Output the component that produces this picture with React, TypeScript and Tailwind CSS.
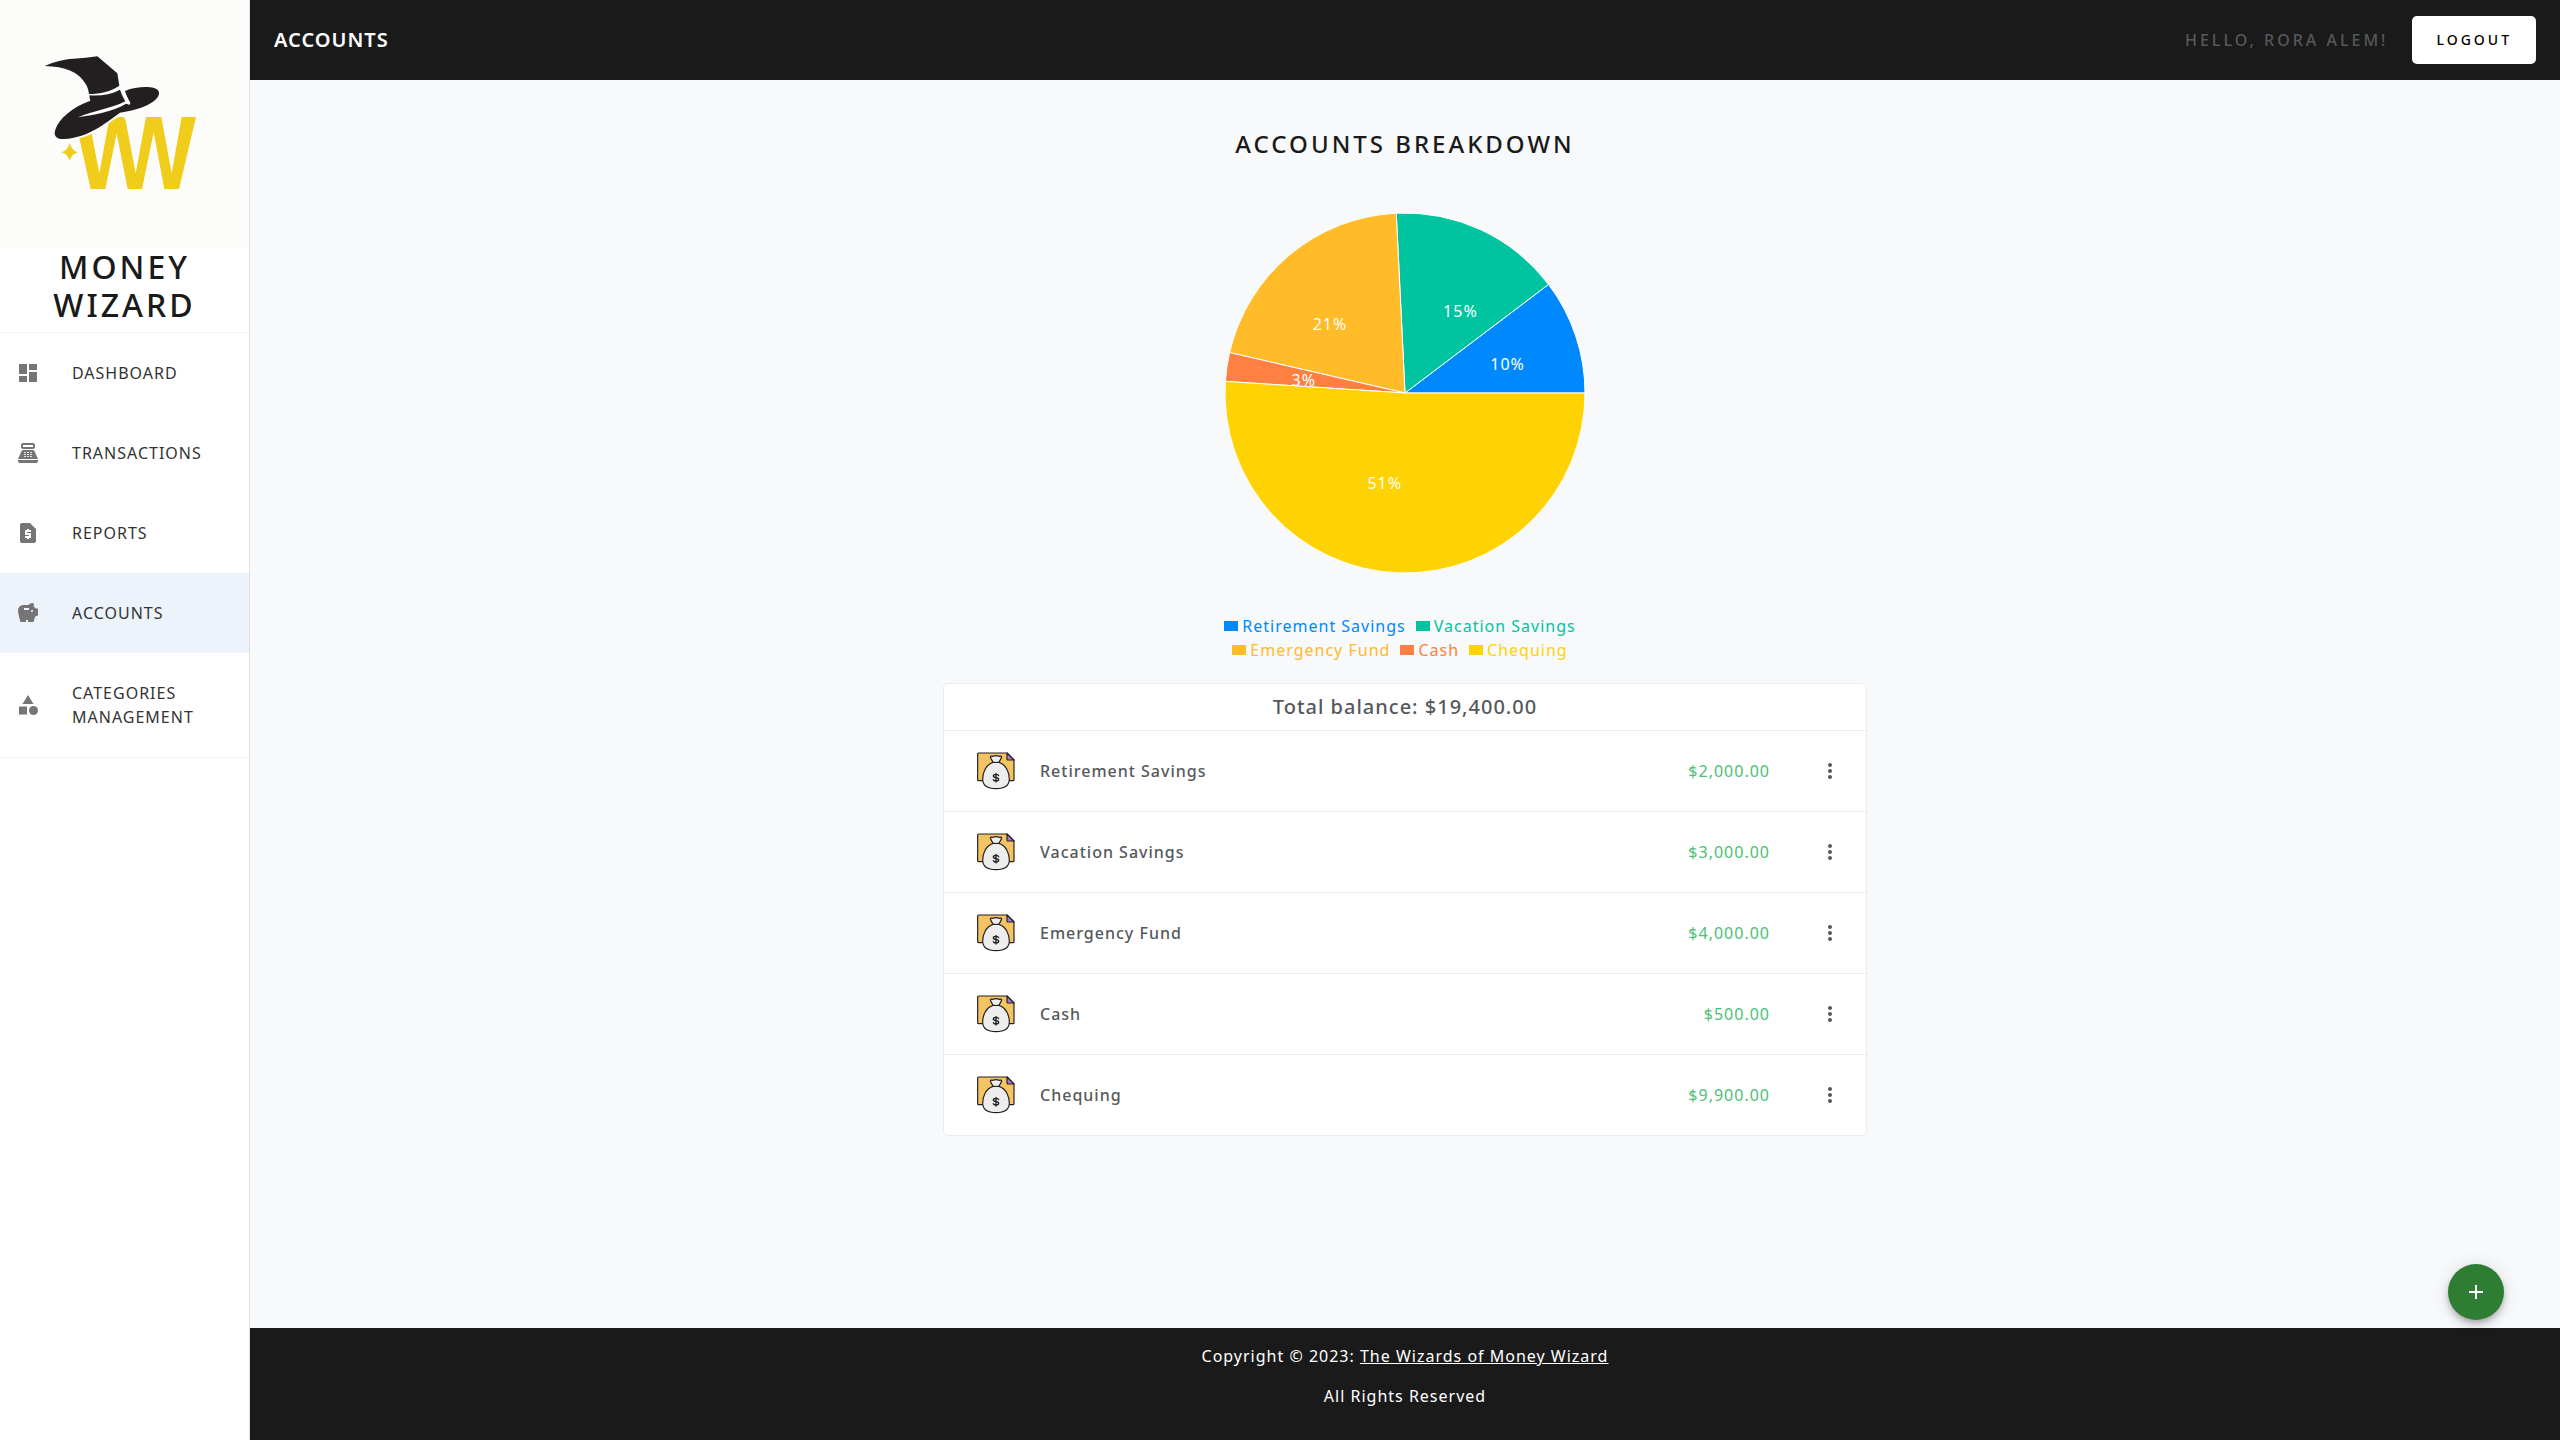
import type { IconType } from 'react-icons'
import {
  MdAdd,
  MdCategory,
  MdDashboard,
  MdMoreVert,
  MdPointOfSale,
  MdRequestPage,
  MdSavings,
} from 'react-icons/md'

type NavItem = { label: string; icon: IconType; active?: boolean }

const navItems: NavItem[] = [
  { label: 'Dashboard', icon: MdDashboard },
  { label: 'Transactions', icon: MdPointOfSale },
  { label: 'Reports', icon: MdRequestPage },
  { label: 'Accounts', icon: MdSavings, active: true },
  { label: 'Categories Management', icon: MdCategory },
]

type Account = { name: string; balance: number; color: string }

const accounts: Account[] = [
  { name: 'Retirement Savings', balance: 2000, color: '#0088fe' },
  { name: 'Vacation Savings', balance: 3000, color: '#00c49f' },
  { name: 'Emergency Fund', balance: 4000, color: '#ffbb28' },
  { name: 'Cash', balance: 500, color: '#ff8042' },
  { name: 'Chequing', balance: 9900, color: '#ffd303' },
]

const total = accounts.reduce((sum, a) => sum + a.balance, 0)

const money = (value: number) =>
  value.toLocaleString('en-US', { style: 'currency', currency: 'USD' })

function WizardLogo() {
  return (
    <svg viewBox="0 0 747 744" className="block w-full bg-[#fcfcfa]" role="img" aria-label="Money Wizard logo">
      <g transform="translate(120 150)">
        <path
          fill="#f0cc1b"
          d="M118 265 Q138 260 155 251 L178 370 L205 222 Q222 206 238 201 Q254 198 257 212 L287 370 L318 201 H364 L395 370 L425 201 H468 L417 417 H373 L341 247 L306 417 H263 L230 250 L196 417 H152 Z"
        />
        <path fill="#f0cc1b" d="M89 278 Q94 301 114 307 Q94 312 89 333 Q84 312 64 307 Q84 301 89 278 Z" />
        <path
          fill="#231f20"
          d="M14 48 C45 34 70 28 100 26 C125 25 150 22 172 19 L232 70 L238 107 C212 124 182 132 147 132 C146 122 143 113 139 105 C118 66 75 49 14 48 Z"
        />
        <path
          fill="#231f20"
          d="M148 136 C178 139 212 134 240 119 C245 133 250 144 256 154 C215 176 165 180 114 202 C165 193 220 185 258 161 L262 163 L270 160 C264 145 258 134 255 123 C280 112 310 110 330 112 C348 114 357 120 357 130 C357 154 305 180 240 188 C190 224 145 262 72 267 C48 268 40 256 46 239 C57 206 95 172 151 152 C149 147 149 141 148 136 Z"
        />
        <path fill="none" stroke="#fcfcfa" strokeWidth="8" strokeLinecap="round" d="M244 112 C250 130 257 145 267 160" />
      </g>
    </svg>
  )
}

function MoneyBagIcon() {
  return (
    <svg viewBox="0 0 120 120" className="size-10 shrink-0" aria-hidden="true">
      <g stroke="#231f20" strokeWidth="3.5" strokeLinejoin="round" strokeLinecap="round">
        <path fill="#f4c362" d="M8 6 H93 L114 27 V86 Q114 89 111 89 H8 Q5 89 5 86 V9 Q5 6 8 6 Z" />
        <path fill="#a77fd0" d="M93 6 L114 27 H96 Q93 27 93 24 Z" />
        <path
          fill="#ededed"
          d="M51 34 C28 42 20 66 20 84 C20 106 36 113 60 113 C84 113 100 106 100 84 C100 66 92 42 69 34 Z"
        />
        <path fill="#ededed" d="M51 33 Q45 24 43 18 Q44 14 51 16 Q60 12 69 16 Q76 14 77 18 Q75 24 69 33 Q60 36 51 33 Z" />
        <path
          fill="none"
          strokeWidth="4"
          d="M68 74 Q67 70 60 70 Q52 70 52 75 Q52 79 60 80 Q68 81 68 85 Q68 90 60 90 Q53 90 52 86 M60 67 V93"
        />
      </g>
    </svg>
  )
}

const CENTER = 181
const RADIUS = 180

function point(angle: number, radius: number) {
  const rad = (angle * Math.PI) / 180
  return { x: CENTER + radius * Math.cos(rad), y: CENTER - radius * Math.sin(rad) }
}

function PieChart() {
  let start = 0
  const slices = accounts.map((account) => {
    const sweep = (account.balance / total) * 360
    const slice = { account, start, end: start + sweep }
    start += sweep
    return slice
  })

  return (
    <svg viewBox="0 0 362 362" className="size-[362px]" role="img" aria-label="Share of balance by account">
      {slices.map(({ account, start, end }) => {
        const a = point(start, RADIUS)
        const b = point(end, RADIUS)
        const large = end - start > 180 ? 1 : 0
        return (
          <path
            key={account.name}
            fill={account.color}
            stroke="#fff"
            d={`M${CENTER} ${CENTER} L${a.x} ${a.y} A${RADIUS} ${RADIUS} 0 ${large} 0 ${b.x} ${b.y} Z`}
          />
        )
      })}
      {slices.map(({ account, start, end }) => {
        const p = point((start + end) / 2, RADIUS / 2)
        return (
          <text
            key={account.name}
            x={p.x}
            y={p.y}
            fill="#fff"
            textAnchor={p.x > CENTER ? 'start' : 'end'}
            dominantBaseline="central"
          >
            {`${Math.round((account.balance / total) * 100)}%`}
          </text>
        )
      })}
    </svg>
  )
}

function Sidebar() {
  return (
    <aside className="w-[250px] shrink-0 border-r border-[#e0e0e0] bg-white">
      <div className="border-b border-[#f4f4f4] pb-2">
        <WizardLogo />
        <p className="text-center text-[32px] leading-[38px] font-medium tracking-[3px] text-[#1a1a1a] uppercase">
          Money
          <br />
          Wizard
        </p>
      </div>
      <nav className="border-b border-[#f4f4f4]">
        {navItems.map(({ label, icon: Icon, active }) => (
          <a
            key={label}
            href="#"
            aria-current={active ? 'page' : undefined}
            className={`flex items-center gap-8 px-4 py-7 text-[#333333] uppercase ${active ? 'bg-[#ecf3fb]' : ''}`}
          >
            <Icon className="size-6 shrink-0 text-[#757575]" />
            {label}
          </a>
        ))}
      </nav>
    </aside>
  )
}

export default function App() {
  return (
    <div className="flex min-h-screen bg-[#f8f9fb] font-['Noto_Sans',sans-serif] text-base tracking-[1px] text-[#55595c]">
      <Sidebar />
      <div className="flex min-w-0 grow flex-col">
        <header className="flex h-20 items-center justify-between bg-[#1a1a1a] px-6">
          <h1 className="text-xl font-semibold text-white uppercase">Accounts</h1>
          <div className="flex items-center gap-6">
            <span className="font-medium tracking-[3px] uppercase">Hello, Rora Alem!</span>
            <button
              type="button"
              className="h-12 rounded-[5px] bg-white px-6 text-sm font-medium tracking-[3px] text-black uppercase"
            >
              Logout
            </button>
          </div>
        </header>

        <main className="flex grow flex-col items-center pt-[46px]">
          <h2 className="text-2xl leading-9 font-medium tracking-[3px] text-[#1a1a1a] uppercase">
            Accounts Breakdown
          </h2>
          <div className="mt-[50px]">
            <PieChart />
          </div>
          <ul className="mt-10 flex w-[380px] flex-wrap justify-center">
            {accounts.map((account) => (
              <li key={account.name} className="mr-[10px] flex items-center gap-1" style={{ color: account.color }}>
                <span className="h-[10px] w-[14px] bg-current" />
                {account.name}
              </li>
            ))}
          </ul>

          <section className="mt-[21px] w-2/5 divide-y divide-[#ebecee] rounded-[5px] border border-[#ebecee] bg-white">
            <h3 className="py-[9px] text-center text-xl leading-7 font-medium">Total balance: {money(total)}</h3>
            {accounts.map((account) => (
              <div key={account.name} className="box-content h-20">
                <div className="flex h-full items-center pr-4 pl-8">
                  <MoneyBagIcon />
                  <span className="ml-6 grow font-medium">{account.name}</span>
                  <span className="text-[#4bbf73]">{money(account.balance)}</span>
                  <button
                    type="button"
                    aria-label={`Options for ${account.name}`}
                    className="ml-10 flex size-10 items-center justify-center"
                  >
                    <MdMoreVert className="size-6" />
                  </button>
                </div>
              </div>
            ))}
          </section>
        </main>

        <footer className="flex h-28 flex-col items-center gap-4 bg-[#1a1a1a] pt-4 text-white">
          <p>
            Copyright © 2023:{' '}
            <a href="#" className="underline">
              The Wizards of Money Wizard
            </a>
          </p>
          <p>All Rights Reserved</p>
        </footer>
      </div>

      <button
        type="button"
        aria-label="Add account"
        className="fixed right-14 bottom-[120px] flex size-14 items-center justify-center rounded-full bg-[#2e7d32] text-white shadow-[0_3px_5px_-1px_rgba(0,0,0,0.2),0_6px_10px_0_rgba(0,0,0,0.14),0_1px_18px_0_rgba(0,0,0,0.12)]"
      >
        <MdAdd className="size-6" />
      </button>
    </div>
  )
}
